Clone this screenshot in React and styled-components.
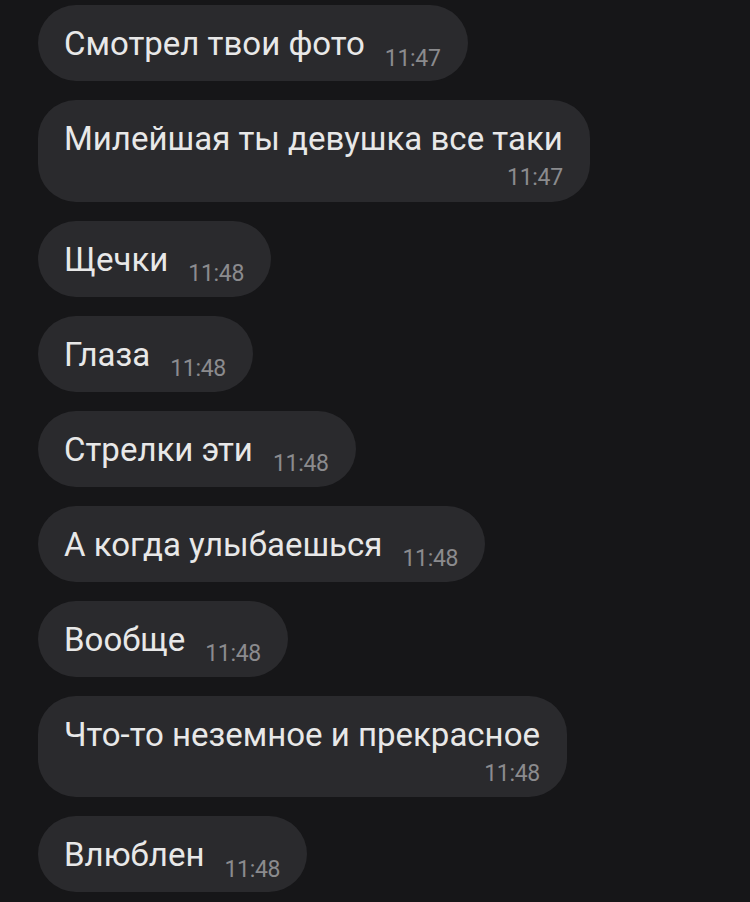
import React from "react";
import styled, { createGlobalStyle } from "styled-components";

const messages = [
  { text: "Смотрел твои фото", time: "11:47" },
  { text: "Милейшая ты девушка все таки", time: "11:47", stacked: true },
  { text: "Щечки", time: "11:48" },
  { text: "Глаза", time: "11:48" },
  { text: "Стрелки эти", time: "11:48" },
  { text: "А когда улыбаешься", time: "11:48" },
  { text: "Вообще", time: "11:48" },
  { text: "Что-то неземное и прекрасное", time: "11:48", stacked: true },
  { text: "Влюблен", time: "11:48" },
];

const App = () => {
  return (
    <>
      <GlobalStyle />
      <Screen>
        {messages.map((m, i) => (
          <Bubble key={i} $stacked={m.stacked}>
            <Text $stacked={m.stacked}>{m.text}</Text>
            <Time>{m.time}</Time>
          </Bubble>
        ))}
      </Screen>
    </>
  );
};

export default App;

const GlobalStyle = createGlobalStyle`
  html, body {
    margin: 0;
    padding: 0;
    background: #161618;
  }
`;

const Screen = styled.div`
  width: 750px;
  height: 902px;
  overflow: hidden;
  box-sizing: border-box;
  background: #161618;
  padding: 5px 0 0 38px;
  display: flex;
  flex-direction: column;
  align-items: flex-start;
  gap: 19px;
  font-family: Roboto, "Noto Sans", sans-serif;
`;

const Bubble = styled.div`
  display: flex;
  flex-direction: ${(p) => (p.$stacked ? "column" : "row")};
  align-items: flex-end;
  gap: ${(p) => (p.$stacked ? "6px" : "20px")};
  background: #2a2a2d;
  border-radius: 38px;
  padding: ${(p) => (p.$stacked ? "19px 27px 10.5px 26px" : "19px 27px 9.5px 26px")};
`;

const Text = styled.div`
  color: #e8e8e8;
  font-size: 33px;
  line-height: 40px;
  white-space: nowrap;
  align-self: flex-start;
  margin-bottom: ${(p) => (p.$stacked ? "0" : "7.5px")};
`;

const Time = styled.div`
  color: #8b8b8e;
  font-size: 23px;
  line-height: 26px;
  letter-spacing: -0.3px;
  white-space: nowrap;
`;
